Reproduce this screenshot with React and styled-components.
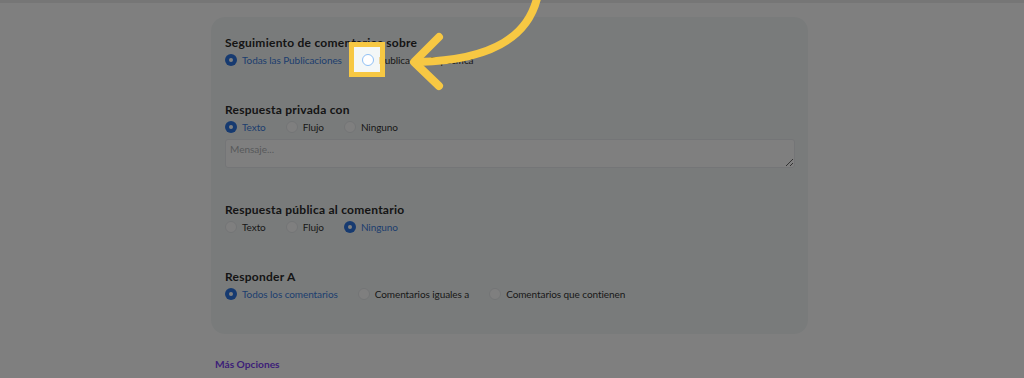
import styled, { createGlobalStyle } from "styled-components";

const GlobalStyle = createGlobalStyle`
  html, body {
    margin: 0;
    padding: 0;
    background: #ffffff;
    font-family: Lato, "Open Sans", sans-serif;
  }
`;

const Page = styled.div`
  position: relative;
  width: 1024px;
  height: 378px;
  overflow: hidden;
  background: #ffffff;
`;

const TopBar = styled.div`
  height: 3px;
  background: #ececec;
`;

const Card = styled.div`
  box-sizing: border-box;
  width: 597px;
  height: 317px;
  margin: 14px 0 0 211px;
  padding: 18px 13px 0 14px;
  background: #f3f7f7;
  border-radius: 14px;
  display: flex;
  flex-direction: column;
  gap: 34px;
`;

const Section = styled.div`
  display: flex;
  flex-direction: column;
`;

const Title = styled.div`
  font-size: 12px;
  letter-spacing: 0.25px;
  line-height: 16px;
  font-weight: 700;
  color: #2a2a2a;
  margin-bottom: 1px;
`;

const RadioRow = styled.div`
  display: flex;
  align-items: center;
  height: 16px;
  gap: 20px;
`;

const Option = styled.label`
  display: flex;
  align-items: center;
  gap: 5px;
  font-size: 10px;
  letter-spacing: -0.08px;
  color: ${({ $checked }) => ($checked ? "#3b7ddd" : "#333")};
`;

const Dot = styled.span`
  box-sizing: border-box;
  width: 12px;
  height: 12px;
  border-radius: 50%;
  flex-shrink: 0;
  position: relative;
  background: ${({ $checked }) => ($checked ? "#2d74e0" : "#fff")};
  border: ${({ $checked, $focus }) =>
    $checked ? "none" : $focus ? "1.5px solid #8fc0f5" : "1px solid #e6e9ec"};

  &::after {
    content: "";
    display: ${({ $checked }) => ($checked ? "block" : "none")};
    position: absolute;
    left: 4px;
    top: 4px;
    width: 4px;
    height: 4px;
    border-radius: 50%;
    background: #fff;
  }
`;

const Message = styled.textarea`
  box-sizing: border-box;
  width: 100%;
  height: 29px;
  margin-top: 4px;
  padding: 3px 4px;
  border: 1px solid #e8ebee;
  border-radius: 3px;
  background: #fff;
  font-family: Lato, sans-serif;
  font-size: 10px;
  color: #333;

  &::placeholder {
    color: #b0b3b6;
  }
`;

const MoreLink = styled.a`
  display: block;
  margin: 22px 0 0 215px;
  font-size: 10.2px;
  line-height: 16px;
  font-weight: 700;
  color: #7a3ff0;
  text-decoration: none;
`;

const Spotlight = styled.div`
  position: absolute;
  left: 349px;
  top: 42px;
  width: 36px;
  height: 35px;
  box-sizing: border-box;
  border: 5px solid #f7c843;
  box-shadow: 0 0 0 2000px rgba(0, 0, 0, 0.5);
  pointer-events: none;
`;

const ArrowLayer = styled.svg`
  position: absolute;
  left: 0;
  top: 0;
  pointer-events: none;
`;

const groups = [
  {
    title: "Seguimiento de comentarios sobre",
    options: ["Todas las Publicaciones", "Publicación Específica"],
    checked: 0,
    focus: 1,
  },
  {
    title: "Respuesta privada con",
    options: ["Texto", "Flujo", "Ninguno"],
    checked: 0,
    message: true,
  },
  {
    title: "Respuesta pública al comentario",
    options: ["Texto", "Flujo", "Ninguno"],
    checked: 2,
  },
  {
    title: "Responder A",
    options: ["Todos los comentarios", "Comentarios iguales a", "Comentarios que contienen"],
    checked: 0,
  },
];

export default function App() {
  return (
    <Page>
      <GlobalStyle />
      <TopBar />
      <Card>
        {groups.map((g) => (
          <Section key={g.title}>
            <Title>{g.title}</Title>
            <RadioRow>
              {g.options.map((opt, i) => (
                <Option key={opt} $checked={i === g.checked}>
                  <Dot $checked={i === g.checked} $focus={i === g.focus} />
                  {opt}
                </Option>
              ))}
            </RadioRow>
            {g.message && <Message placeholder="Mensaje..." />}
          </Section>
        ))}
      </Card>
      <MoreLink href="#">Más Opciones</MoreLink>

      <Spotlight />
      <ArrowLayer width="1024" height="378" viewBox="0 0 1024 378">
        <path
          d="M538 -6 C530 35 495 60 418 62"
          fill="none"
          stroke="#f7c843"
          strokeWidth="8"
          strokeLinecap="round"
        />
        <path
          d="M439 37 L414 62 L439 86"
          fill="none"
          stroke="#f7c843"
          strokeWidth="8"
          strokeLinecap="round"
          strokeLinejoin="round"
        />
      </ArrowLayer>
    </Page>
  );
}
